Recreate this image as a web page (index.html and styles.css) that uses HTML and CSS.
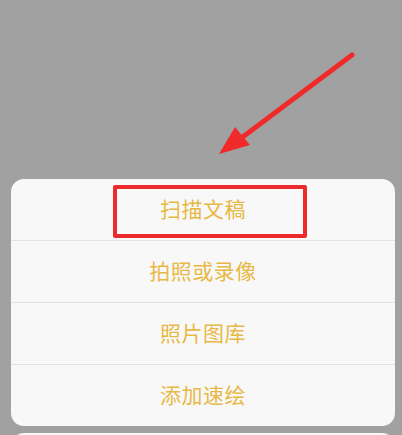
FILE: index.html
```html
<!DOCTYPE html>
<html lang="zh">
<head>
<meta charset="utf-8">
<link rel="stylesheet" href="styles.css">
</head>
<body>
<div class="screen">
  <div class="sheet">
    <div class="row"><span class="label">扫描文稿</span><div class="highlight"></div></div>
    <div class="row"><span class="label">拍照或录像</span></div>
    <div class="row"><span class="label">照片图库</span></div>
    <div class="row"><span class="label">添加速绘</span></div>
  </div>
  <div class="cancel"></div>
  <svg class="arrow" width="402" height="435" viewBox="0 0 402 435">
    <line x1="352" y1="55" x2="240" y2="139" stroke="#f02a2a" stroke-width="5" stroke-linecap="round"/>
    <polygon points="219,154 235,127 250,145" fill="#f02a2a"/>
  </svg>
</div>
</body>
</html>
```
FILE: styles.css
```css
html, body {
  margin: 0;
  padding: 0;
}
body {
  width: 402px;
  height: 435px;
  overflow: hidden;
  background: #a1a1a1;
  font-family: "Noto Sans CJK SC", "Noto Sans", sans-serif;
}
.screen {
  position: relative;
  width: 402px;
  height: 435px;
  padding: 179px 7px 0 11px;
  box-sizing: border-box;
  display: flex;
  flex-direction: column;
  gap: 7px;
  overflow: hidden;
}
.sheet {
  flex: none;
  background: #f8f8f8;
  border-radius: 13px;
  display: flex;
  flex-direction: column;
  overflow: hidden;
}
.row {
  position: relative;
  height: 61px;
  flex: none;
  display: flex;
  align-items: center;
  justify-content: center;
  border-top: 1px solid #e3e3e3;
}
.row:first-child {
  border-top: none;
  height: 61px;
}
.label {
  font-size: 21px;
  line-height: 1;
  color: #e8b845;
  letter-spacing: 0.5px;
  margin-bottom: 3px;
}
.highlight {
  position: absolute;
  left: 102px;
  top: 6px;
  width: 186px;
  height: 45px;
  border: 4px solid #ec2a2c;
  border-radius: 2px;
}
.cancel {
  height: 40px;
  background: #f8f8f8;
  border-radius: 13px;
  flex: none;
}
.arrow {
  position: absolute;
  left: 0;
  top: 0;
}
```
